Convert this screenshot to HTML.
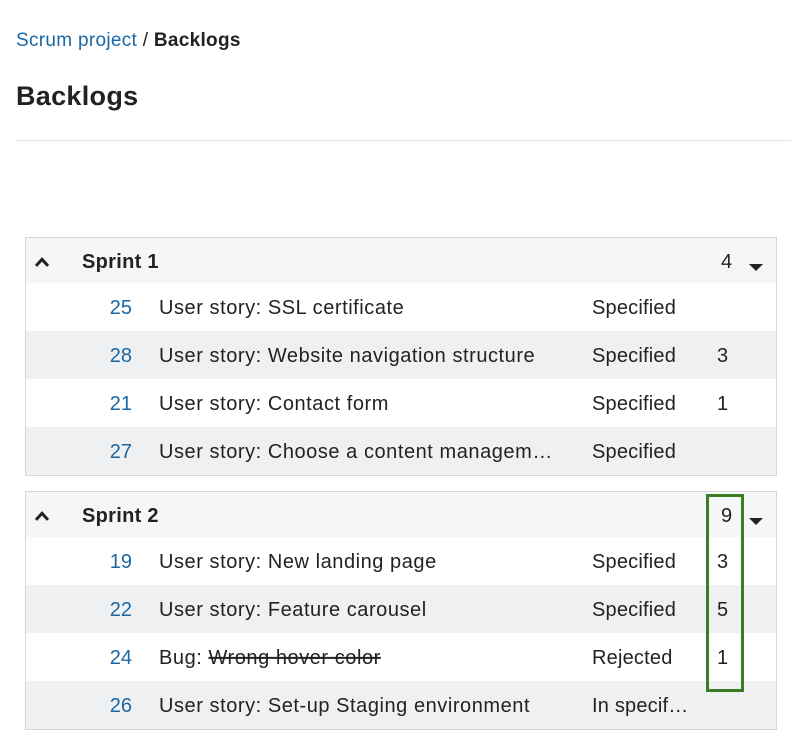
<!DOCTYPE html>
<html><head><style>
body{margin:0;width:791px;height:750px;background:#fff;font-family:"Liberation Sans",sans-serif;color:#222;position:relative;overflow:hidden}
.a{position:absolute;white-space:nowrap}
.bc{left:16px;top:30px;font-size:19px;letter-spacing:0.3px}
.bc span{color:#1a67a3}
h1{position:absolute;left:16px;top:81px;margin:0;font-size:27px;font-weight:bold;letter-spacing:0.3px}
.hr{position:absolute;left:16px;right:0;top:140px;border-top:1px solid #e2e4e8}
.box{position:absolute;left:25px;width:750px;border:1px solid #d3d6db;background:#fff}
.hd{height:45px;background:#f5f6f8;position:relative;font-size:20px}
.row{height:48px;position:relative;font-size:20px;letter-spacing:0.55px}
.row.g{background:#eff0f2}
.row div,.hd div{position:absolute;top:50%;transform:translateY(-44%);white-space:nowrap}
.n{right:644px;color:#1a67a3;letter-spacing:0}
.t{left:133px;width:404px;overflow:hidden;text-overflow:ellipsis}
.s{left:566px;width:98px;overflow:hidden;text-overflow:ellipsis;letter-spacing:0.2px}
.p{left:691px}
.car{left:8px}
.sn{left:56px;font-weight:bold;letter-spacing:0.3px}
.cnt{left:695px}
.tri{position:absolute;left:723px;top:26px;width:0;height:0;border-left:7px solid transparent;border-right:7px solid transparent;border-top:7px solid #222}
</style></head><body>
<div class="a bc"><span>Scrum project</span> / <b>Backlogs</b></div>
<h1>Backlogs</h1>
<div class="hr"></div>
<div class="box" style="top:237px">
<div class="hd"><div class="car"><svg width="16" height="12" viewBox="0 0 16 12"><path d="M2 10 L8 3.5 L14 10" stroke="#222" stroke-width="3" fill="none"/></svg></div><div class="sn">Sprint 1</div><div class="cnt">4</div><span class="tri"></span></div>
<div class="row"><div class="n">25</div><div class="t">User story: SSL certificate</div><div class="s">Specified</div></div>
<div class="row g"><div class="n">28</div><div class="t">User story: Website navigation structure</div><div class="s">Specified</div><div class="p">3</div></div>
<div class="row"><div class="n">21</div><div class="t">User story: Contact form</div><div class="s">Specified</div><div class="p">1</div></div>
<div class="row g"><div class="n">27</div><div class="t">User story: Choose a content management system</div><div class="s">Specified</div></div>
</div>
<div class="box" style="top:491px">
<div class="hd"><div class="car"><svg width="16" height="12" viewBox="0 0 16 12"><path d="M2 10 L8 3.5 L14 10" stroke="#222" stroke-width="3" fill="none"/></svg></div><div class="sn">Sprint 2</div><div class="cnt">9</div><span class="tri"></span></div>
<div class="row"><div class="n">19</div><div class="t">User story: New landing page</div><div class="s">Specified</div><div class="p">3</div></div>
<div class="row g"><div class="n">22</div><div class="t">User story: Feature carousel</div><div class="s">Specified</div><div class="p">5</div></div>
<div class="row"><div class="n">24</div><div class="t">Bug: <s>Wrong hover color</s></div><div class="s">Rejected</div><div class="p">1</div></div>
<div class="row g"><div class="n">26</div><div class="t">User story: Set-up Staging environment</div><div class="s">In specification</div></div>
</div>
<div class="a" style="left:706px;top:494px;width:32px;height:192px;border:3px solid #3a7d22"></div>
</body></html>
